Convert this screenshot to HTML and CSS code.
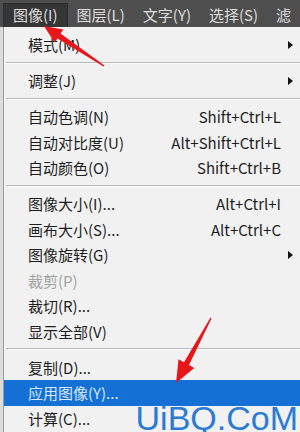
FILE: index.html
```html
<!DOCTYPE html>
<html>
<head>
<meta charset="utf-8">
<title>图像菜单</title>
<link rel="stylesheet" href="styles.css">
</head>
<body>
  <div class="menubar">
    <span class="topitem open">图像(I)</span>
    <span class="topitem">图层(L)</span>
    <span class="topitem">文字(Y)</span>
    <span class="topitem">选择(S)</span>
    <span class="topitem">滤</span>
  </div>

  <div class="menu">
    <div class="item"><span>模式(M)</span><span></span><span class="sub"></span></div>
    <div class="sep"></div>
    <div class="item"><span>调整(J)</span><span></span><span class="sub"></span></div>
    <div class="sep"></div>
    <div class="item"><span>自动色调(N)</span><span class="key">Shift+Ctrl+L</span><span></span></div>
    <div class="item"><span>自动对比度(U)</span><span class="key">Alt+Shift+Ctrl+L</span><span></span></div>
    <div class="item"><span>自动颜色(O)</span><span class="key">Shift+Ctrl+B</span><span></span></div>
    <div class="sep"></div>
    <div class="item"><span>图像大小(I)...</span><span class="key">Alt+Ctrl+I</span><span></span></div>
    <div class="item"><span>画布大小(S)...</span><span class="key">Alt+Ctrl+C</span><span></span></div>
    <div class="item"><span>图像旋转(G)</span><span></span><span class="sub"></span></div>
    <div class="item disabled"><span>裁剪(P)</span><span></span><span></span></div>
    <div class="item"><span>裁切(R)...</span><span></span><span></span></div>
    <div class="item"><span>显示全部(V)</span><span></span><span></span></div>
    <div class="sep"></div>
    <div class="item"><span>复制(D)...</span><span></span><span></span></div>
    <div class="item active"><span>应用图像(Y)...</span><span></span><span></span></div>
    <div class="item"><span>计算(C)...</span><span></span><span></span></div>
  </div>

  <div class="watermark">UiBQ.CoM</div>

  <svg class="arrows" width="300" height="432" viewBox="0 0 300 432">
    <!-- arrow to the 图像 menu title -->
    <polygon fill="#e8161a" points="44,26 63.4,29.4 60.5,33.5 104.5,65.5 103.5,66.5 57.5,38.5 54.6,42.6"/>
    <!-- arrow to 应用图像 -->
    <polygon fill="#e8161a" points="176,383 178.5,359.3 184,362.3 210.5,317.5 211.5,318.5 189,365 194.3,367.9"/>
  </svg>
</body>
</html>
```
FILE: styles.css
```css
body {
  margin: 0;
  width: 300px;
  height: 432px;
  overflow: hidden;
  background: #dcdcdc;
  font-family: "Noto Sans CJK SC", "Noto Sans", sans-serif;
  font-size: 15px;
  position: relative;
}

.menubar {
  height: 27px;
  background: #4e4e4e;
  display: flex;
  align-items: flex-end;
  padding-left: 3px;
}
.topitem {
  color: #dedede;
  height: 24px;
  line-height: 24px;
  padding: 0 9px 0 9px;
  box-sizing: border-box;
  white-space: nowrap;
}
.topitem.open {
  background: #363636;
  border: 1px solid #2b2b2b;
  border-bottom: none;
  line-height: 22px;
}

.menu {
  margin-left: 3px;
  border-left: 1px solid #9c9c9c;
  background: #f1f1f1;
  padding-top: 5px;
  height: 400px;
}
.item {
  height: 25.5px;
  display: grid;
  grid-template-columns: 1fr auto 19px;
  align-items: center;
  padding-left: 24px;
  color: #1e1e1e;
  white-space: nowrap;
}
.item .key {
  text-align: right;
}
.item .sub {
  justify-self: center;
  width: 0;
  height: 0;
  border-top: 4px solid transparent;
  border-bottom: 4px solid transparent;
  border-left: 5px solid #111;
}
.item.disabled { color: #a3a3a3; }
.item.active {
  background: #1570d6;
  color: #d8e8fb;
}

.sep {
  height: 10.5px;
  display: flex;
  align-items: center;
  padding-left: 2px;
}
.sep::after {
  content: "";
  flex: 1;
  border-top: 1px solid #b9b9b9;
  border-bottom: 1px solid #fbfbfb;
}

.watermark {
  position: absolute;
  right: 2px;
  bottom: 0;
  line-height: 28px;
  font-family: "Liberation Sans", sans-serif;
  font-size: 34px;
  color: #2b7bd6;
}

.arrows {
  position: absolute;
  left: 0;
  top: 0;
  pointer-events: none;
}
```
